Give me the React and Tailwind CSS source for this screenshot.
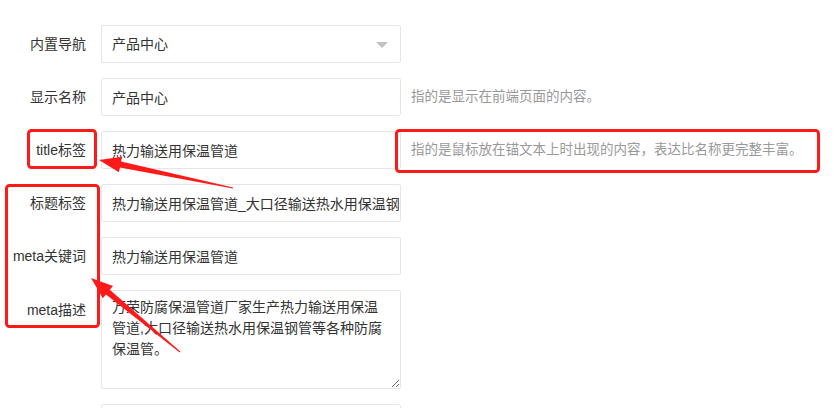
const font = { fontFamily: '"Liberation Sans", "Noto Sans CJK SC", sans-serif' };

const Row = ({ label, children, hint, top }) => (
  <div className={`flex ${top ? "items-start" : "items-center"} mb-[15px]`}>
    <label
      className={`w-[86px] shrink-0 text-right text-[14px] text-[#333] ${
        top ? "pt-[10px]" : ""
      }`}
    >
      {label}
    </label>
    <div className="ml-[15px] w-[300px] shrink-0">{children}</div>
    {hint && (
      <span className="ml-[10px] text-[13.5px] text-[#999] whitespace-nowrap">
        {hint}
      </span>
    )}
  </div>
);

const inputCls =
  "w-full h-[38px] pl-[10px] text-[14px] text-[#333] bg-white border border-[#e6e6e6] rounded-[2px] outline-none";

export default function App() {
  return (
    <div className="relative w-[834px] h-[408px] overflow-hidden bg-white" style={font}>
      <div className="pt-[25px]">
        <Row label="内置导航">
          <div className="relative flex items-center h-[38px] px-[10px] text-[14px] text-[#333] border border-[#e6e6e6] rounded-[2px]">
            产品中心
            <span className="absolute right-[12px] top-[16px] w-0 h-0 border-l-[6px] border-r-[6px] border-t-[6px] border-l-transparent border-r-transparent border-t-[#c2c2c2]" />
          </div>
        </Row>
        <Row label="显示名称" hint="指的是显示在前端页面的内容。">
          <input className={`${inputCls} pr-[10px]`} defaultValue="产品中心" />
        </Row>
        <Row label="title标签" hint="指的是鼠标放在锚文本上时出现的内容，表达比名称更完整丰富。">
          <input className={`${inputCls} pr-[10px]`} defaultValue="热力输送用保温管道" />
        </Row>
        <Row label="标题标签">
          <input
            className={`${inputCls} pr-[1px]`}
            defaultValue="热力输送用保温管道_大口径输送热水用保温钢管_万荣防腐保温管道厂家"
          />
        </Row>
        <Row label="meta关键词">
          <input className={`${inputCls} pr-[10px]`} defaultValue="热力输送用保温管道" />
        </Row>
        <Row label="meta描述" top>
          <textarea
            className="block w-full h-[99px] px-[10px] py-[6px] text-[14px] leading-[21px] text-[#333] border border-[#e6e6e6] rounded-[2px] outline-none"
            defaultValue="万荣防腐保温管道厂家生产热力输送用保温管道,大口径输送热水用保温钢管等各种防腐保温管。"
          />
        </Row>
        <Row label="">
          <input className={`${inputCls} pr-[10px]`} defaultValue="" />
        </Row>
      </div>

      <svg className="absolute inset-0 pointer-events-none" width="834" height="408">
        <g fill="none" stroke="#ff1a1a" strokeWidth="3">
          <rect x="28.5" y="130.5" width="67" height="37" rx="3" />
          <rect x="6.5" y="185.5" width="92" height="141" rx="3" />
          <rect x="396.5" y="130.5" width="422" height="41" rx="3" />
        </g>
        <g fill="#ff1a1a">
          <polygon points="99,160 122.1,156.7 121.1,161.6 233.1,187.5 232.9,188.5 119.9,167.4 118.9,172.3" />
          <polygon points="91,278 113,286 109.8,289.8 180.3,351.6 179.7,352.4 106,294.4 102.8,298.3" />
        </g>
      </svg>
    </div>
  );
}
